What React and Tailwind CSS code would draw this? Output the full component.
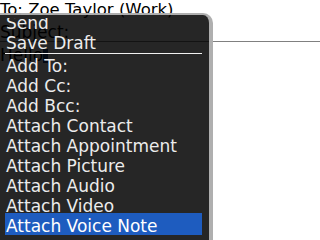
const items = [
  'Send',
  'Save Draft',
  '-',
  'Add To:',
  'Add Cc:',
  'Add Bcc:',
  'Attach Contact',
  'Attach Appointment',
  'Attach Picture',
  'Attach Audio',
  'Attach Video',
  'Attach Voice Note',
];

export default function App() {
  const selected = 'Attach Voice Note';
  return (
    <div className="relative w-[320px] h-[240px] overflow-hidden bg-white text-black font-['DejaVu_Sans',sans-serif]">
      {/* message behind the menu */}
      <div className="flex flex-col">
        <div className="h-5 text-[16.5px] leading-5 whitespace-nowrap">To: Zoe Taylor (Work)</div>
        <div className="h-[21px] text-[17px] leading-[24px] whitespace-nowrap">Subject:</div>
        <div className="h-px bg-[#808080]" />
        <div className="flex items-start h-5 mt-[3px]">
          <span className="text-[17px] leading-5">Hello</span>
          <span className="w-[5px] h-[14px] mt-[4px] bg-[#1f3f7f]" />
        </div>
      </div>

      {/* menu */}
      <div className="absolute left-0 top-[13px] w-[213px] h-[240px] rounded-tr-[10px] border-t-2 border-r-[4px] border-[#d2d2d2]/80 bg-black/[0.85] pt-[3px]">
        <div className="h-full overflow-hidden">
          <div className="-mt-[7px] flex flex-col">
            {items.map((item, i) =>
              item === '-' ? (
                <div key={i} className="h-[3px] pt-[2px] mx-[5px] w-[197px]">
                  <div className="h-px bg-[#f0f0f0]" />
                </div>
              ) : item === selected ? (
                <div
                  key={i}
                  className="mx-[5px] w-[197px] h-[22px] -mt-px pl-px text-[17px] leading-[26px] text-white bg-[#1e5cbf] whitespace-nowrap"
                >
                  {item}
                </div>
              ) : (
                <div
                  key={i}
                  className="mx-[5px] w-[197px] h-5 pl-px text-[17px] leading-[24px] text-[#ececec] whitespace-nowrap"
                >
                  {item}
                </div>
              )
            )}
          </div>
        </div>
      </div>
    </div>
  );
}
